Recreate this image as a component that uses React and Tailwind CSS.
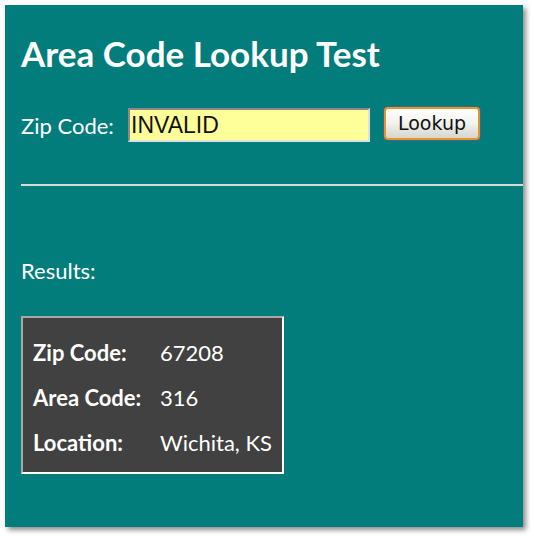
export default function App() {
  const rows = [
    ["Zip Code:", "67208"],
    ["Area Code:", "316"],
    ["Location:", "Wichita, KS"],
  ];

  return (
    <div className="w-[534px] h-[542px] bg-white pt-[5px] pl-[5px]">
      <div
        className="w-[518px] h-[522px] bg-[#037c7c] shadow-[3px_3px_5px_rgba(0,0,0,0.45)] pt-[28px] pl-[16px] text-white"
        style={{ fontFamily: "Lato, 'Open Sans', sans-serif" }}
      >
        <h1 className="text-[35px] font-bold leading-[40px]">Area Code Lookup Test</h1>

        {/* Lookup form */}
        <div className="flex items-center mt-[34px] h-[36px]">
          <label className="text-[22px] w-[107px]">Zip Code:</label>
          <input
            type="text"
            defaultValue="INVALID"
            className="w-[242px] h-[34px] bg-[#ffff99] border-2 border-t-[#8a8a8a] border-l-[#8a8a8a] border-b-[#e0e0e0] border-r-[#e0e0e0] px-[1px] text-[23px] text-[#111] outline-none"
            style={{ fontFamily: "'Liberation Sans', Arial, sans-serif" }}
          />
          <button
            className="ml-[14px] -mt-[3px] w-[96px] h-[33px] rounded-[4px] border-2 border-[#e8922c] bg-gradient-to-b from-white via-[#f2f2ee] to-[#d6d6ce] text-[19px] text-[#111] shadow-[0_0_0_1px_#3a6a8a]"
            style={{ fontFamily: "'DejaVu Sans', Tahoma, sans-serif" }}
          >
            Lookup
          </button>
        </div>

        <div className="mt-[41px] h-[2px] bg-[#d8d8d8]" />

        <p className="mt-[72px] text-[22px] leading-[26px]">Results:</p>

        {/* Result box */}
        <div className="mt-[32px] w-[263px] h-[158px] bg-[#414141] border-2 border-t-[#a8a8a8] border-l-[#a8a8a8] border-b-white border-r-white pt-[20px] pl-[10px]">
          {rows.map(([k, v]) => (
            <div key={k} className="flex h-[45px] items-start text-[22px] leading-[30px]">
              <span className="font-bold w-[127px]">{k}</span>
              <span>{v}</span>
            </div>
          ))}
        </div>
      </div>
    </div>
  );
}
